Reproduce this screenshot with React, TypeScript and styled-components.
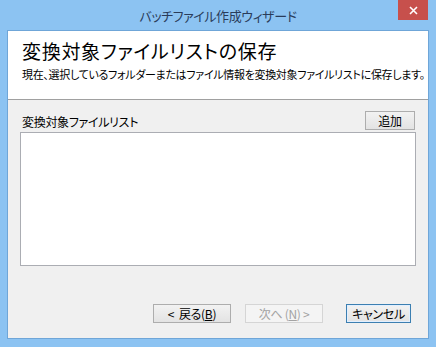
import React from "react";
import styled, { createGlobalStyle } from "styled-components";

const GlobalStyle = createGlobalStyle`
  html, body {
    margin: 0;
    padding: 0;
    background: #ffffff;
  }
  body {
    font-family: "Noto Sans CJK JP", "Noto Sans", sans-serif;
    font-feature-settings: "palt";
  }
`;

const StWindow = styled.div`
  width: 436px;
  height: 347px;
  box-sizing: border-box;
  background: #8cc3f2;
  padding: 0 7px 8px 7px;
  display: flex;
  flex-direction: column;
`;

const StTitleBar = styled.div`
  height: 30px;
  display: grid;
  grid-template-columns: 1fr auto 1fr;
  align-items: center;
`;

const StTitle = styled.div`
  grid-column: 2;
  font-size: 13px;
  letter-spacing: -0.4px;
  color: #2a3c5a;
  padding-top: 1px;
`;

const StClose = styled.div`
  grid-column: 3;
  justify-self: end;
  align-self: start;
  width: 30px;
  height: 20px;
  margin-right: 1px;
  background: #c7504c;
  display: flex;
  align-items: center;
  justify-content: center;
`;

const StClient = styled.div`
  flex: 1;
  border: 1px solid #6fa6d8;
  background: #f0f0f0;
  display: flex;
  flex-direction: column;
`;

const StHeader = styled.div`
  height: 69px;
  box-sizing: border-box;
  background: #ffffff;
  border-bottom: 1px solid #a0a0a0;
  padding: 8px 0 0 14px;
`;

const StHeading = styled.div`
  font-size: 19px;
  line-height: 24px;
  color: #000;
  letter-spacing: 0.7px;
`;

const StSubtitle = styled.div`
  margin-top: 3px;
  font-size: 11px;
  line-height: 16px;
  color: #000;
  white-space: nowrap;
  letter-spacing: -0.3px;
`;

const StBody = styled.div`
  flex: 1;
  display: flex;
  flex-direction: column;
  padding: 11px 12px 15px 12px;
`;

const StListHeader = styled.div`
  display: flex;
  align-items: center;
  justify-content: space-between;
  margin-bottom: 2px;
  padding-right: 1px;
`;

const StLabel = styled.div`
  font-size: 12px;
  color: #000;
  margin-left: 2px;
  margin-top: 2px;
  letter-spacing: -0.3px;
`;

const StButton = styled.div<{ $width: number; $variant?: "default" | "disabled" }>`
  width: ${(p) => p.$width}px;
  height: 19px;
  box-sizing: border-box;
  display: flex;
  align-items: center;
  justify-content: center;
  font-size: 12px;
  letter-spacing: -0.3px;
  white-space: pre;
  border: 1px solid
    ${(p) =>
      p.$variant === "default"
        ? "#3c7fb1"
        : p.$variant === "disabled"
        ? "#d5d5d5"
        : "#adadad"};
  background: ${(p) =>
    p.$variant === "disabled"
      ? "#f4f4f4"
      : "linear-gradient(#f2f2f2, #e3e3e3)"};
  color: ${(p) => (p.$variant === "disabled" ? "#a3a3a3" : "#000")};
  box-shadow: ${(p) =>
    p.$variant === "default" ? "inset 0 0 0 1px #e1efff" : "none"};
`;

const StList = styled.div`
  height: 134px;
  box-sizing: border-box;
  background: #ffffff;
  border: 1px solid #abadb3;
`;

const StFooter = styled.div`
  margin-top: auto;
  display: flex;
  justify-content: flex-end;
  padding-right: 5px;
`;

const StU = styled.span`
  text-decoration: underline;
`;

const CloseIcon = () => (
  <svg width="9" height="9" viewBox="0 0 9 9">
    <path d="M1 1 L8 8 M8 1 L1 8" stroke="#ffffff" strokeWidth="1.6" />
  </svg>
);

export default function App() {
  return (
    <>
      <GlobalStyle />
      <StWindow>
        <StTitleBar>
          <StTitle>バッチファイル作成ウィザード</StTitle>
          <StClose>
            <CloseIcon />
          </StClose>
        </StTitleBar>
        <StClient>
          <StHeader>
            <StHeading>変換対象ファイルリストの保存</StHeading>
            <StSubtitle>
              現在、選択しているフォルダーまたはファイル情報を変換対象ファイルリストに保存します。
            </StSubtitle>
          </StHeader>
          <StBody>
            <StListHeader>
              <StLabel>変換対象ファイルリスト</StLabel>
              <StButton $width={50}>追加</StButton>
            </StListHeader>
            <StList />
            <StFooter>
              <StButton $width={78} style={{ marginRight: 14 }}>
                {"<  戻る("}
                <StU>B</StU>)
              </StButton>
              <StButton $width={78} $variant="disabled" style={{ marginRight: 23 }}>
                {"次へ ("}
                <StU>N</StU>
                {") >"}
              </StButton>
              <StButton $width={65} $variant="default">
                キャンセル
              </StButton>
            </StFooter>
          </StBody>
        </StClient>
      </StWindow>
    </>
  );
}
